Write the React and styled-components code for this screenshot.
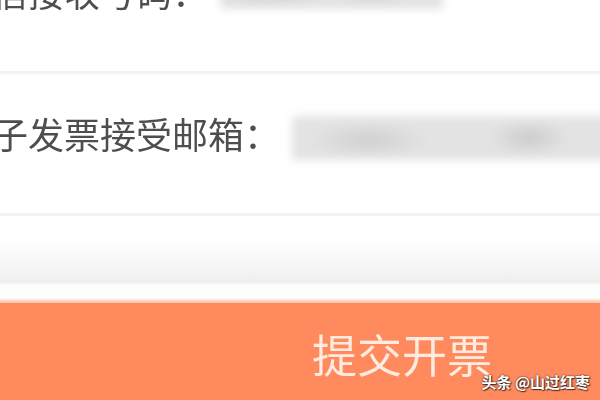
import React from 'react';
import styled, { createGlobalStyle } from 'styled-components';

const GlobalStyle = createGlobalStyle`
  html, body {
    margin: 0;
    padding: 0;
    background: #ffffff;
  }
  body {
    font-family: "Noto Sans CJK SC", "Noto Sans", sans-serif;
  }
`;

const Viewport = styled.div`
  position: relative;
  width: 600px;
  height: 400px;
  overflow: hidden;
  background: #ffffff;
`;

const Form = styled.div`
  margin-top: -68px;
  display: flex;
  flex-direction: column;
`;

const Row = styled.div`
  display: flex;
  align-items: center;
  gap: 12px;
  height: 142px;
  padding-bottom: 22px;
  box-sizing: border-box;
  margin-left: -44px;
  border-bottom: 3px solid #f3f3f3;
  background: #ffffff;
`;

const Label = styled.span`
  flex: none;
  font-size: 36px;
  line-height: 1;
  color: #4e4e4e;
  white-space: nowrap;
  filter: blur(0.7px);
`;

const Hidden = styled.div`
  flex: ${p => (p.$grow ? '1' : 'none')};
  width: ${p => p.$width || 'auto'};
  height: 44px;
  margin-top: ${p => p.$shift || 0}px;
  margin-right: ${p => (p.$grow ? '-40px' : '0')};
  border-radius: 4px;
  background:
    radial-gradient(ellipse 60px 18px at 22% 55%, #cfcfcf, transparent),
    radial-gradient(ellipse 40px 18px at 68% 50%, #cbcbcb, transparent),
    #e3e3e3;
  filter: blur(4px);
`;

const Gap = styled.div`
  height: 87px;
  background: linear-gradient(
    to bottom,
    #ffffff 0px,
    #ffffff 24px,
    #f8f8f8 44px,
    #efefef 66px,
    #fcfefc 69px,
    #fdfffd 82px,
    #fbc7b0 86px
  );
`;

const SubmitButton = styled.div`
  height: 120px;
  background: #ff8a5d;
  padding-left: 312px;
  padding-top: 26px;
  box-sizing: border-box;
  font-size: 45px;
  line-height: 1.1;
  color: rgba(255, 243, 236, 0.92);
  filter: blur(0.5px);
`;

const Watermark = styled.div`
  position: absolute;
  right: 10px;
  bottom: 11px;
  font-size: 15px;
  font-weight: 700;
  line-height: 1;
  color: #ffffff;
  text-shadow: 0 0 2px rgba(0, 0, 0, 0.9), 1px 1px 1px rgba(0, 0, 0, 0.6);
`;

export default function App() {
  return (
    <>
      <GlobalStyle />
      <Viewport>
        <Form>
          <Row>
            <Label>短信接收号码：</Label>
            <Hidden $width="223px" $shift={-8} />
          </Row>
          <Row>
            <Label>电子发票接受邮箱：</Label>
            <Hidden $grow $shift={10} />
          </Row>
          <Gap />
          <SubmitButton>提交开票</SubmitButton>
        </Form>
        <Watermark>头条 @山过红枣</Watermark>
      </Viewport>
    </>
  );
}
